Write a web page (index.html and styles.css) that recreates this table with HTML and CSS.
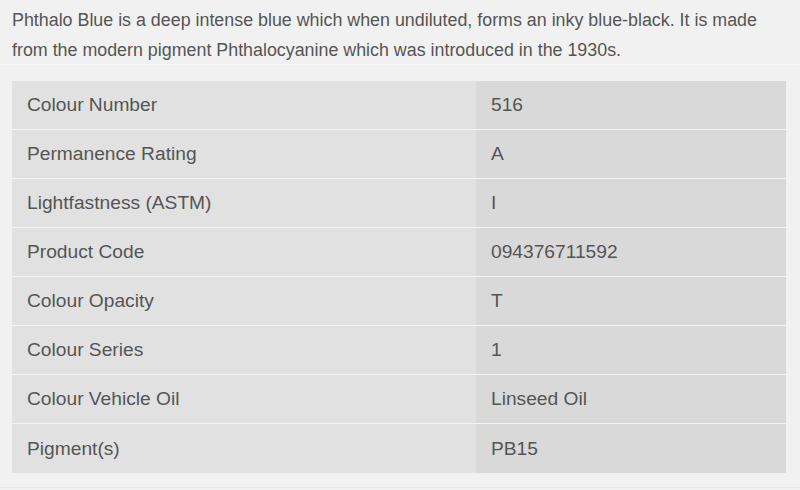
FILE: index.html
```html
<!DOCTYPE html>
<html>
<head>
<meta charset="utf-8">
<link rel="stylesheet" href="styles.css">
</head>
<body>
<div class="intro">
  <p>Phthalo Blue is a deep intense blue which when undiluted, forms an inky blue-black. It is made from the modern pigment Phthalocyanine which was introduced in the 1930s.</p>
</div>
<div class="specs">
  <table class="spec-table">
    <tr><td>Colour Number</td><td>516</td></tr>
    <tr><td>Permanence Rating</td><td>A</td></tr>
    <tr><td>Lightfastness (ASTM)</td><td>I</td></tr>
    <tr><td>Product Code</td><td>094376711592</td></tr>
    <tr><td>Colour Opacity</td><td>T</td></tr>
    <tr><td>Colour Series</td><td>1</td></tr>
    <tr><td>Colour Vehicle Oil</td><td>Linseed Oil</td></tr>
    <tr><td>Pigment(s)</td><td>PB15</td></tr>
  </table>
</div>
</body>
</html>
```
FILE: styles.css
```css
html, body {
  margin: 0;
  padding: 0;
  background: #f1f1f1;
  font-family: "Liberation Sans", Arial, sans-serif;
  color: #555;
}
.intro {
  height: 65px;
  border-bottom: 1px solid #f8f8f8;
  padding: 0 12px;
  box-sizing: border-box;
}
.intro p {
  margin: 0;
  padding-top: 5px;
  font-size: 17.85px;
  line-height: 30px;
}
.specs {
  padding: 16px 14px 14px 12px;
  height: 423px;
  box-sizing: border-box;
  border-bottom: 1px solid #e6e6e6;
}
.spec-table {
  width: 774px;
  border-collapse: separate;
  border-spacing: 0;
  font-size: 19.2px;
}
.spec-table td {
  height: 49px;
  padding: 0 15px;
  border-bottom: 1px solid #f4f4f4;
  box-sizing: border-box;
}
.spec-table tr:last-child td {
  border-bottom: none;
}
.spec-table td:first-child {
  background: #e1e1e1;
  width: 464px;
}
.spec-table td:last-child {
  background: #d9d9d9;
}
```
